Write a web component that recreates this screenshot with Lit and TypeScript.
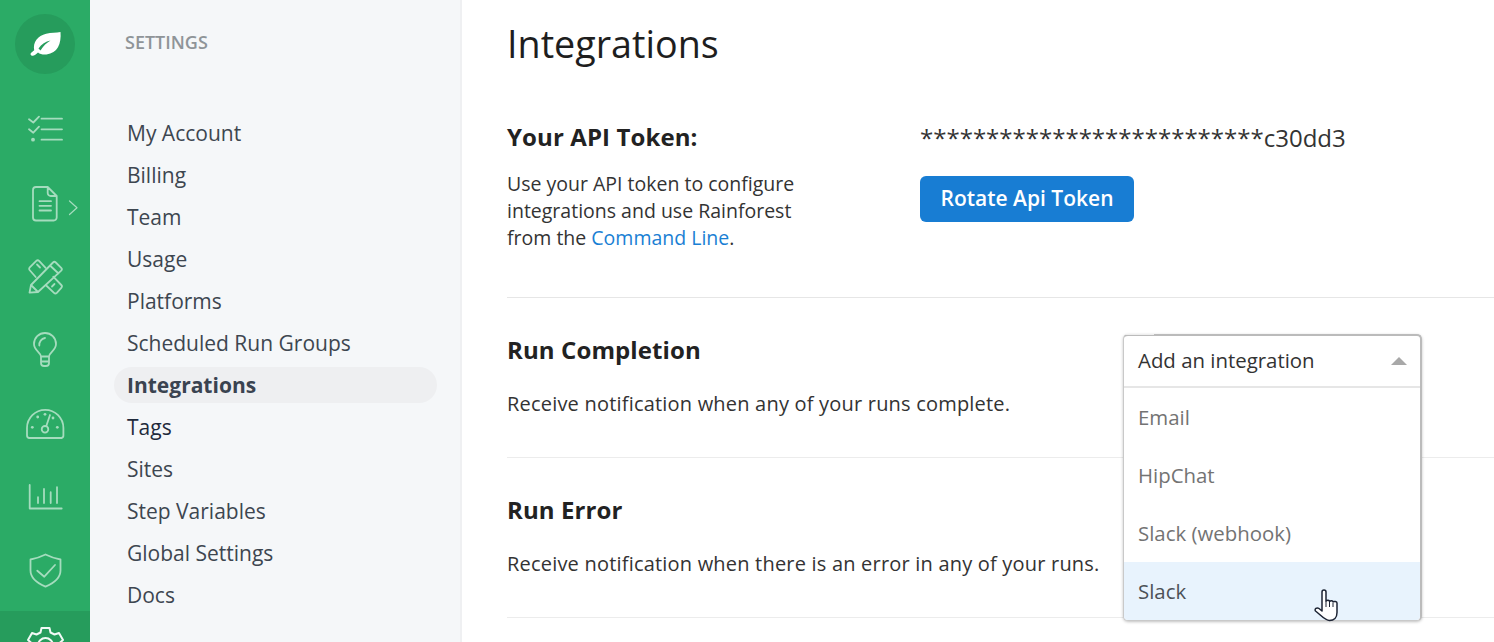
import { LitElement, html, css, svg } from "lit";
import { customElement } from "lit/decorators.js";

const navItems = ["My Account","Billing","Team","Usage","Platforms","Scheduled Run Groups","Integrations","Tags","Sites","Step Variables","Global Settings","Docs"];

const icons = [
  svg`<path d="M29 119.300l4.300 3.200 5.700-5.800M29 129.300l4.300 3.400 5.700-6"/><circle cx="33" cy="139.700" r="1.900" fill="currentColor" stroke="none"/><path d="M41.500 118.700H62M41.500 129.300H62M41.500 139.700H62"/>`,
  svg`<path d="M36 186.500h11.700l9 9V217a3 3 0 0 1-3 3H36a3 3 0 0 1-3-3v-27.500a3 3 0 0 1 3-3zM47.700 186.500v6a3 3 0 0 0 3 3h6M39.500 200.700H51M39.500 205.300H51M39.500 210H51"/><path class="chev" d="M69.500 200.500l7.500 6.700-7.500 6.800"/>`,
  svg`<path d="M29.500 267.700l6.800-6.800a2 2 0 0 1 2.800 0l6.500 7M35.700 277l-5.700-6.500a2 2 0 0 1-.500-2.800M37 264.500l3 3M45.700 285l8.300 7.800a2 2 0 0 0 2.800 0l4.500-5a2 2 0 0 0 0-2.800l-8-8.300M52 286.500l2.500-2.500"/><path d="M31 285l22-22.500a2 2 0 0 1 2.800 0l5.400 5.300a2 2 0 0 1 0 2.800L38 292l-8.500.7zM50 265.500l8.500 8M31 285l7 7"/>`,
  svg`<path d="M41 356c0-4-7-6-7-12.500a11 11 0 0 1 22 0C56 350 49 352 49 356zM41 356v6.500a3 3 0 0 0 3 3h2a3 3 0 0 0 3-3V356M41 361h8M39.300 345a7 7 0 0 1 5.700-7.500"/>`,
  svg`<path d="M29 438a2.500 2.500 0 0 1-2-2.500v-7.500a18.200 18.200 0 0 1 36.400 0v7.500a2.500 2.500 0 0 1-2 2.500z"/><circle cx="45" cy="429.300" r="3.300"/><path d="M46.300 426l3.700-11"/><g fill="currentColor" stroke="none"><circle cx="32.300" cy="427.300" r="1.400"/><circle cx="57.300" cy="427.300" r="1.400"/><circle cx="37.700" cy="417" r="1.400"/><circle cx="45" cy="414.300" r="1.400"/><circle cx="53" cy="418" r="1.400"/></g>`,
  svg`<path d="M29.700 484.500V508h32M38 496.700V502.500M44 488.500V502.500M50.700 491.700V502.500M57 486.700V502.500"/>`,
  svg`<path d="M45.500 554.500c5 2.500 9.500 4 15 5v11c0 7.500-6.500 12.500-15 16.200-8.500-3.700-15-8.700-15-16.200v-11c5.500-1 10-2.500 15-5z"/><path d="M37.300 570.700l7 6L55 565"/>`,
];

const tops = [92, 165.5, 239, 312.5, 386, 459.5, 533];

@customElement("app-root")
export class AppRoot extends LitElement {
  static styles = css`
    :host { display: block; height: 642px; overflow: hidden; font-family: "Open Sans", sans-serif; color: #222; background: #fff; }
    .page { display: flex; height: 642px; overflow: hidden; }
    .rail { width: 90px; flex: none; background: #2bab66; display: flex; flex-direction: column; }
    .logo-wrap { height: 92px; display: flex; justify-content: center; padding-top: 14px; box-sizing: border-box; flex: none; }
    .logo { width: 60px; height: 60px; border-radius: 50%; background: #269c5c; }
    .logo svg { display: block; }
    .rail-item { height: 73.5px; flex: none; }
    .rail-item svg { display: block; width: 90px; height: 73.5px; fill: none; stroke: #a5dcbe; stroke-width: 1.8; color: #a5dcbe; stroke-linecap: round; stroke-linejoin: round; }
    .rail-item .chev { stroke-width: 1.2; }
    .active { background: #269c5c; margin-top: 4.5px; }
    .active svg { stroke: #f2faf6; color: #f2faf6; stroke-width: 2; }
    .side { width: 372px; flex: none; box-sizing: border-box; background: #f5f7f9; border-right: 2px solid #eff0f2; padding: 30px 23px 0 24px; }
    .side-title { font-size: 18px; font-weight: 600; line-height: 24px; color: #8f9498; padding-left: 11px; }
    .nav { margin-top: 61px; display: flex; flex-direction: column; }
    .nav a { height: 36px; line-height: 36px; margin-bottom: 6px; padding-left: 13px; font-size: 21px; color: #3d4650; border-radius: 18px; }
    .nav a.sel { background: #eeeff1; font-weight: 700; color: #3a4350; }
    .nav a.dark { color: #1f2a3c; }
    .main { flex: 1; min-width: 0; padding-left: 45px; position: relative; }
    h1 { margin: 0; font-size: 37.7px; font-weight: 400; line-height: 46px; color: #1e1e1e; padding-top: 21px; }
    .token { display: flex; height: 231px; box-sizing: border-box; padding-top: 55px; border-bottom: 1px solid #e6e6e6; }
    h2 { margin: 0; font-size: 24px; font-weight: 700; line-height: 30px; color: #222; letter-spacing: .1px; }
    .token-left { width: 413px; flex: none; }
    .token-left p { margin: 18px 0 0; font-size: 19.5px; line-height: 27px; color: #333; width: 320px; }
    .token-left a { color: #1a7fd4; }
    .mask { font-size: 24px; line-height: 32px; color: #333; }
    .btn { display: inline-block; margin-top: 22px; height: 46px; line-height: 44px; padding: 0 20.5px; background: #187dd3; color: #fff; border-radius: 6px; font-size: 21px; font-weight: 600; }
    .row { height: 160px; box-sizing: border-box; padding-top: 37px; border-bottom: 1px solid #ececec; }
    .row p { margin: 25px 0 0; font-size: 20px; letter-spacing: .2px; line-height: 27px; color: #333; }
    .dd { position: absolute; left: 661px; top: 334px; width: 299px; box-sizing: border-box; background: #fff; border: 1px solid #c9c9c9; border-top: 2px solid #bbb; border-right: 2px solid #bbb; border-radius: 5px; box-shadow: 0 1px 3px rgba(0,0,0,.25); }
    .dd::before { content: ""; position: absolute; left: 1px; top: -2px; width: 29px; height: 1px; background: #eee; }
    .dd-head { height: 52px; box-sizing: border-box; border-bottom: 2px solid #e6e6e6; display: flex; align-items: center; justify-content: space-between; padding: 0 13px 2px 14px; font-size: 20.4px; color: #333; }
    .tri { width: 0; height: 0; border-left: 8px solid transparent; border-right: 8px solid transparent; border-bottom: 8px solid #a8a8a8; margin-top: 2px; }
    .dd-item { height: 58px; line-height: 58px; padding-left: 14px; font-size: 20.4px; color: #737373; position: relative; }
    .dd-item.hover { background: #e8f3fd; color: #4c5157; border-radius: 0 0 4px 4px; }
    .cursor { position: absolute; left: 190px; top: 27px; width: 26px; height: 34px; }
  `;
  render() {
    return html`<div class="page">
      <div class="rail">
        <div class="logo-wrap"><div class="logo">
          <svg width="60" height="60" viewBox="15 14 60 60"><path d="M60.500 32c1 12-3 21-14 22.500-3.500.4-6.500-.3-8.500-2-1.500 1.500-3 3-5 3.200-2 .2-3.300-1.700-1.800-3 1-.8 2-1.500 3-2.500-1.500-8 3.500-14.500 12-16.500 5-1.200 10-.7 14.300-1.700zM38.500 48.500c3-4.500 7-7 12-8-4 2.500-7 5-10 10z" fill="#fff" fill-rule="evenodd"/></svg>
        </div></div>
        ${icons.map((i, n) => html`<div class="rail-item"><svg viewBox="0 ${tops[n]} 90 73.5">${i}</svg></div>`)}
        <div class="rail-item active"><svg viewBox="0 611 90 73.5"><path d="M41.500 628h8l1 4.500 4 2 4.500-1.500 4 7-3.500 3v5l3.500 3-4 7-4.500-1.500-4 2-1 4.500h-8l-1-4.500-4-2-4.500 1.500-4-7 3.500-3v-5l-3.500-3 4-7 4.500 1.500 4-2z"/><circle cx="45.500" cy="645.500" r="7.500"/></svg></div>
      </div>
      <div class="side">
        <div class="side-title">SETTINGS</div>
        <div class="nav">${navItems.map(n => html`<a class="${n==="Integrations"?"sel":n==="Tags"?"dark":""}">${n}</a>`)}</div>
      </div>
      <div class="main">
        <h1>Integrations</h1>
        <div class="token">
          <div class="token-left">
            <h2>Your API Token:</h2>
            <p>Use your API token to configure integrations and use Rainforest from the <a>Command Line</a>.</p>
          </div>
          <div>
            <div class="mask">**************************c30dd3</div>
            <span class="btn">Rotate Api Token</span>
          </div>
        </div>
        <div class="row"><h2>Run Completion</h2><p>Receive notification when any of your runs complete.</p></div>
        <div class="row"><h2>Run Error</h2><p>Receive notification when there is an error in any of your runs.</p></div>
        <div class="dd">
          <div class="dd-head"><span>Add an integration</span><span class="tri"></span></div>
          <div class="dd-item">Email</div>
          <div class="dd-item">HipChat</div>
          <div class="dd-item">Slack (webhook)</div>
          <div class="dd-item hover">Slack
            <svg class="cursor" viewBox="0 0 26 34"><path d="M8 3a2 2 0 0 1 4 0v9c1-1 3.500-1 3.500.5 1-1 3.500-1 3.500.5 1-1 4-.5 4 1v9.500c0 5-3 8-7.500 8-4.500 0-7-4-14-9.500-1.500-2 1.500-4 3.500-2.500l3 2.500z" fill="#fff" stroke="#1c2333" stroke-width="1.500" stroke-linejoin="round"/><path d="M12 12v6M15.500 13v5M19 14v4" stroke="#1c2333" fill="none"/></svg>
          </div>
        </div>
      </div>
    </div>`;
  }
}
